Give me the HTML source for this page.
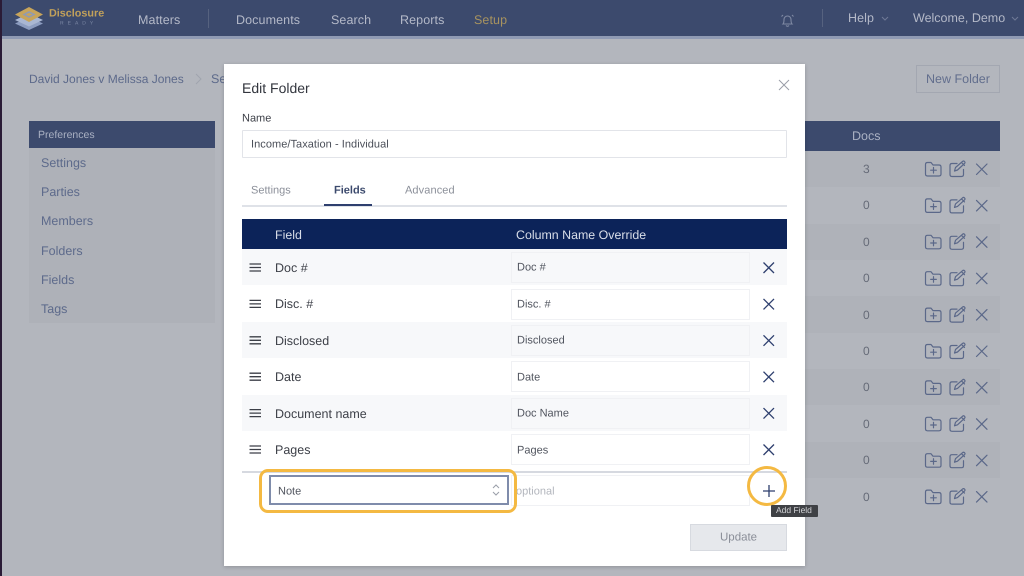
<!DOCTYPE html>
<html><head><meta charset="utf-8"><style>
html,body{margin:0;padding:0;width:1024px;height:576px;overflow:hidden;background:#b3b6bd;font-family:"Liberation Sans",sans-serif;text-rendering:geometricPrecision}
div,span{position:absolute;box-sizing:border-box}
.t{white-space:nowrap;line-height:1;transform:translateY(-50%)}
.n{color:#b4b9c8;font-size:12.5px;letter-spacing:.1px}
.s{color:#5d6a8b;font-size:12.5px;left:41px}
.d{color:#666b78;font-size:12px;left:863px}
.r{left:242px;width:545px;height:36.4px}
.a{background:#f7f8fa}
.l{left:275px;color:#3c3f47;font-size:12.5px}
.i{left:511px;width:239px;background:#fff;border:1px solid #f0f1f4;height:31px}
.v{left:517px;color:#50545e;font-size:11px}
svg{position:absolute;overflow:visible}
</style></head><body>
<div style="left:0;top:0;width:2px;height:576px;background:#2a1b36"></div>
<div style="left:2px;top:0;width:1022px;height:36px;background:#3c4a6d"></div>
<div style="left:2px;top:36px;width:1022px;height:3px;background:#8f9ab3"></div>

<svg style="left:0;top:0" width="120" height="36">
<path d="M15 23.500l14-6.500 14 6.500-14 6.500z" fill="#8d9dc0"/>
<path d="M15 20l14-6.500 14 6.500-14 6.500z" fill="#aab7d2"/>
<path d="M15 14.500l14-7.500 14 7.500-14 7.500z" fill="#c7a45a"/>
<path d="M24 14.500l5-2.500 5 2.500-5 2.500z" fill="none" stroke="#8e9ab5" stroke-width="1.500"/>
</svg>
<span class="t" style="left:49px;top:14px;color:#c2a15a;font-size:10.800px;font-weight:bold">Disclosure</span>
<span class="t" style="left:60px;top:24px;color:#7e8aa6;font-size:5px;letter-spacing:4px">READY</span>

<span class="t n" style="left:138px;top:20px">Matters</span>
<div style="left:208px;top:9px;width:1px;height:19px;background:#56627f"></div>
<span class="t n" style="left:236px;top:20px">Documents</span>
<span class="t n" style="left:331px;top:20px">Search</span>
<span class="t n" style="left:400px;top:20px">Reports</span>
<span class="t n" style="left:474px;top:20px;color:#a8935f">Setup</span>
<svg style="left:780px;top:13px" width="15" height="15" fill="none" stroke="#7f89a3" stroke-width="1.100"><path d="M3 11c1-1 1-2 1-4.500a3.500 3.500 0 0 1 7 0c0 2.500 0 3.500 1 4.500zM6 12.500q1.500 1.500 3 0M1.500 3.500l1.500-1.500M13.500 3.500l-1.500-1.500"/></svg>
<div style="left:822px;top:9px;width:1px;height:18px;background:#56627f"></div>
<span class="t n" style="left:848px;top:18px">Help</span>
<svg style="left:881px;top:16px" width="8" height="5" fill="none" stroke="#6f7a96"><path d="M1 1l3 3 3-3"/></svg>
<span class="t n" style="left:913px;top:18px;letter-spacing:0">Welcome, Demo</span>
<svg style="left:1011px;top:16px" width="8" height="5" fill="none" stroke="#6f7a96"><path d="M1 1l3 3 3-3"/></svg>

<span class="t" style="left:29px;top:79px;color:#5d6a8b;font-size:12px">David Jones v Melissa Jones</span>
<svg style="left:195px;top:73px" width="8" height="12" fill="none" stroke="#a0a4ae"><path d="M1 1l5 5-5 5"/></svg>
<span class="t" style="left:211px;top:79px;color:#5d6a8b;font-size:12.5px">Se</span>
<div style="left:916px;top:65px;width:84px;height:28px;border:1px solid #a3a7b1"></div>
<span class="t" style="left:926px;top:79px;color:#626e8d;font-size:12.5px">New Folder</span>

<div style="left:29px;top:121px;width:186px;height:202px;background:#aeb1b8"></div>
<div style="left:29px;top:121px;width:186px;height:27px;background:#3c4a6d"></div>
<span class="t" style="left:38px;top:134.5px;color:#aab1c3;font-size:10.5px">Preferences</span>
<span class="t s" style="top:162.5px">Settings</span>
<span class="t s" style="top:191.5px">Parties</span>
<span class="t s" style="top:221px">Members</span>
<span class="t s" style="top:250.5px">Folders</span>
<span class="t s" style="top:279.5px">Fields</span>
<span class="t s" style="top:309px">Tags</span>

<div style="left:780px;top:121px;width:220px;height:30px;background:#3c4a6d"></div>
<span class="t" style="left:852px;top:136px;color:#aab1c3;font-size:12.5px">Docs</span>
<div style="left:780px;top:151px;width:220px;height:36px;background:#afb2b9"></div>
<div style="left:780px;top:224px;width:220px;height:36px;background:#afb2b9"></div>
<div style="left:780px;top:296px;width:220px;height:37px;background:#afb2b9"></div>
<div style="left:780px;top:369px;width:220px;height:36px;background:#afb2b9"></div>
<div style="left:780px;top:442px;width:220px;height:36px;background:#afb2b9"></div>
<span class="t d" style="top:169px">3</span>
<span class="t d" style="top:205px">0</span>
<span class="t d" style="top:242px">0</span>
<span class="t d" style="top:278px">0</span>
<span class="t d" style="top:315px">0</span>
<span class="t d" style="top:351px">0</span>
<span class="t d" style="top:387px">0</span>
<span class="t d" style="top:424px">0</span>
<span class="t d" style="top:460px">0</span>
<span class="t d" style="top:497px">0</span>

<svg style="left:0;top:0" width="1024" height="576">
<defs><g id="ic" fill="none" stroke="#5b6889" stroke-width="1.200" stroke-linecap="round" stroke-linejoin="round">
<path d="M925.500 164.500q0-2 2-2h3.500l2 2.500h6q2 0 2 2v7q0 2-2 2h-11.500q-2 0-2-2zM933.500 167.500v5.500M930.700 170.200h5.600"/>
<path d="M957 163.500h-5q-2 0-2 2v9q0 2 2 2h9.500q2 0 2-2v-5M954.500 171l1-3.500 7-6q1-1 2 0t0 2l-7 6.500zM961.500 162.500l3 3"/>
<path d="M976.500 164l10.500 10.500M987 164l-10.500 10.500"/>
</g></defs>
<use href="#ic"/><use href="#ic" y="36.400"/><use href="#ic" y="72.800"/><use href="#ic" y="109.200"/><use href="#ic" y="145.600"/><use href="#ic" y="182"/><use href="#ic" y="218.400"/><use href="#ic" y="254.800"/><use href="#ic" y="291.200"/><use href="#ic" y="327.600"/>
</svg>

<div style="left:223.500px;top:64px;width:581.500px;height:502px;background:#fff;box-shadow:0 1px 4px rgba(0,0,0,.2)"></div>
<span class="t" style="left:242px;top:88px;color:#33363e;font-size:14px">Edit Folder</span>
<svg style="left:778px;top:79px" width="12" height="12" fill="none" stroke="#9a9ea8"><path d="M1 1l10 10M11 1l-10 10"/></svg>
<span class="t" style="left:242px;top:118.500px;color:#3c3f47;font-size:11px">Name</span>
<div style="left:242px;top:130px;width:545px;height:28px;border:1px solid #e2e4e9;border-radius:1px"></div>
<span class="t" style="left:251px;top:144.500px;color:#4a4e58;font-size:11px;letter-spacing:.05px">Income/Taxation - Individual</span>

<span class="t" style="left:251px;top:190.500px;color:#8b8f99;font-size:11px">Settings</span>
<span class="t" style="left:334px;top:190.500px;color:#3c4a6d;font-size:11px;font-weight:bold">Fields</span>
<span class="t" style="left:405px;top:190.500px;color:#8b8f99;font-size:11px;letter-spacing:.1px">Advanced</span>
<div style="left:242px;top:205px;width:545px;height:2px;background:#dfe2e8"></div>
<div style="left:324px;top:204px;width:48px;height:2px;background:#2e3f6e"></div>

<div style="left:242px;top:219px;width:545px;height:30px;background:#0c2359"></div>
<span class="t" style="left:275px;top:234.500px;color:#d8dde8;font-size:12.4px">Field</span>
<span class="t" style="left:516px;top:234.500px;color:#d8dde8;font-size:12.4px">Column Name Override</span>

<div class="r a" style="top:249px"></div>
<div class="r a" style="top:322px"></div>
<div class="r a" style="top:395px"></div>
<div class="i" style="top:252px;background:#f7f8fa"></div>
<div class="i" style="top:289px"></div>
<div class="i" style="top:325px;background:#f7f8fa"></div>
<div class="i" style="top:361px"></div>
<div class="i" style="top:398px;background:#f7f8fa"></div>
<div class="i" style="top:434px"></div>
<span class="t l" style="top:267.500px">Doc #</span><span class="t v" style="top:268px">Doc #</span>
<span class="t l" style="top:304px">Disc. #</span><span class="t v" style="top:304.500px">Disc. #</span>
<span class="t l" style="top:340.500px">Disclosed</span><span class="t v" style="top:340.500px">Disclosed</span>
<span class="t l" style="top:377px">Date</span><span class="t v" style="top:377.500px">Date</span>
<span class="t l" style="top:413.500px">Document name</span><span class="t v" style="top:413.500px">Doc Name</span>
<span class="t l" style="top:449.500px">Pages</span><span class="t v" style="top:450.500px">Pages</span>

<svg style="left:0;top:0" width="1024" height="576">
<defs>
<g id="ro" fill="none" stroke-width="1.300">
<path d="M249.500 264h11.500M249.500 267.500h11.500M249.500 271h11.500" stroke="#3c3f47"/>
<path d="M763.500 262.500l10.500 10.500M774 262.500l-10.500 10.500" stroke="#2e3f6e"/>
</g></defs>
<use href="#ro"/><use href="#ro" y="36.400"/><use href="#ro" y="72.800"/><use href="#ro" y="109.200"/><use href="#ro" y="145.600"/><use href="#ro" y="182"/>
</svg>

<div style="left:242px;top:471px;width:545px;height:1.500px;background:#d6d9e0"></div>
<div class="i" style="top:475px;height:31px"></div>
<span class="t" style="left:516px;top:491.500px;color:#b3b6bd;font-size:11px">optional</span>
<div style="left:269px;top:475px;width:240px;height:30px;border:2px solid #7f8cab;background:#fff"></div>
<span class="t" style="left:278px;top:491.500px;color:#50545e;font-size:11px">Note</span>
<svg style="left:491px;top:483px" width="10" height="14" fill="none" stroke="#9a9ea8"><path d="M2 5l3-3 3 3M2 9l3 3 3-3"/></svg>
<div style="left:259px;top:468.500px;width:258px;height:44px;border:3px solid #f4b942;border-radius:9px"></div>
<div style="left:747px;top:466px;width:40px;height:40px;border:3px solid #f4b942;border-radius:50%"></div>
<svg style="left:762px;top:483.500px" width="14" height="14" fill="none" stroke="#2e3f6e" stroke-width="1.300"><path d="M7 1v12M1 7h12"/></svg>
<div style="left:771px;top:504.500px;width:47px;height:12.500px;background:#3f4145;border-radius:1px"></div>
<span class="t" style="left:776px;top:510px;color:#d4d5d8;font-size:8.500px">Add Field</span>
<div style="left:690px;top:524px;width:97px;height:27px;background:#e6e8ec;border:1px solid #d7dae0"></div>
<span class="t" style="left:720px;top:538px;color:#8a8e98;font-size:11.500px">Update</span>
</body></html>
